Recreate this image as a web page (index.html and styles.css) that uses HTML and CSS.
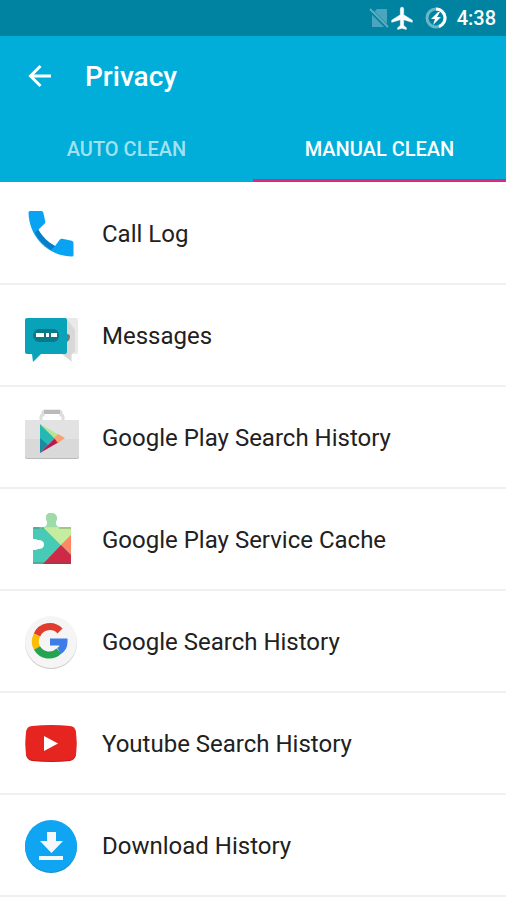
FILE: index.html
```html
<!DOCTYPE html>
<html lang="en">
<head>
    <meta charset="UTF-8">
    <meta name="viewport" content="width=device-width, initial-scale=1.0">
    <title>Privacy</title>
    <link rel="stylesheet" href="styles.css">
</head>
<body>
    <div class="status-bar">
        <svg class="status-icon" viewBox="0 0 20 22" width="20" height="22" aria-hidden="true">
            <path d="M8 2h10v18H3V7z" fill="#4aa5bd"/>
            <path d="M1 3l17 17" stroke="#0083a0" stroke-width="4"/>
            <path d="M1 2l18 18" stroke="#5caec3" stroke-width="2"/>
        </svg>
        <svg class="status-icon" viewBox="0 0 24 24" width="26" height="26" aria-hidden="true">
            <path d="M21.5 16v-2l-8-5V3.5a1.5 1.5 0 0 0-3 0V9l-8 5v2l8-2.5V19l-2.500 2v1.500l4-1 4 1V21l-2.500-2v-5.500z" fill="#fff" stroke="#fff" stroke-width=".5"/>
        </svg>
        <svg class="status-icon battery" viewBox="0 0 22 22" width="22" height="22" aria-hidden="true">
            <circle cx="11" cy="11" r="9" fill="none" stroke="#6ab5c8" stroke-width="3"/>
            <path d="M11 2a9 9 0 0 1 3 17.500" fill="none" stroke="#fff" stroke-width="3"/>
            <path d="M13 5l-7 7h4l-2 6 8-8h-4l3-5z" fill="#fff"/>
        </svg>
        <span class="clock">4:38</span>
    </div>

    <header class="header">
        <div class="toolbar">
            <button class="back" type="button" aria-label="Back">
                <svg viewBox="0 0 24 24" width="24" height="24">
                    <path d="M23 12H3M12.500 2L2.500 12l10 10" fill="none" stroke="#fff" stroke-width="3"/>
                </svg>
            </button>
            <h1>Privacy</h1>
        </div>
        <nav class="tabs">
            <a class="tab" href="#auto">AUTO CLEAN</a>
            <a class="tab active" href="#manual">MANUAL CLEAN</a>
        </nav>
    </header>

    <main>
        <ul class="list">
            <li>
                <a class="item" href="#calls">
                    <svg class="icon" viewBox="0 0 60 60" aria-hidden="true">
                        <path d="M9 7h11.500q1.500 0 1.800 1.500l2 9q.3 1.500-1 2.500L17 26q6 11 17 16l4.500-6q1-1.500 2.800-1.200l9.500 2q1.700.4 1.700 2V51q0 1.500-1.500 1.500C27 52 8 33 7.500 8.500Q7.500 7 9 7z" fill="#08a4f3"/>
                        <path d="M17 25q6 11 17 17l-4 4Q19 39 14 29z" fill="#087fc5"/>
                    </svg>
                    Call Log
                </a>
            </li>
            <li>
                <a class="item" href="#messages">
                    <svg class="icon" viewBox="0 0 60 60" aria-hidden="true">
                        <path d="M40 12h15q2 0 2 2v32q0 2-2 2h-4v8l-10-8z" fill="#e9e9e9"/>
                        <path d="M46 13l8 11v21l-4 4v6l-9-7h5z" fill="#d8d8d8"/>
                        <path d="M46 28q3 0 3 3t-3 5z" fill="#777"/>
                        <path d="M6 12h38q2 0 2 2v32q0 2-2 2H20l-8 8-1-8H6q-2 0-2-2V14q0-2 2-2z" fill="#08a3b8"/>
                        <rect x="12" y="23" width="26" height="13" rx="6" fill="#087989"/>
                        <path d="M15 27h8v4h-8zM25 27h3v4h-3zM30 27h6v4h-6z" fill="#fff"/>
                    </svg>
                    Messages
                </a>
            </li>
            <li>
                <a class="item" href="#play">
                    <svg class="icon" viewBox="0 0 60 60" aria-hidden="true">
                        <path d="M20 13V9q0-2 2-2V5q0-2 2-2h14q2 0 2 2v2q2 0 2 2v4" fill="none" stroke="#dcdcdc" stroke-width="3"/>
                        <path d="M23 4h16" stroke="#bababa" stroke-width="4"/>
                        <rect x="4" y="13" width="54" height="38" rx="2" fill="#b9b9b9"/>
                        <rect x="4" y="12" width="54" height="38" rx="2" fill="#d9d9d9"/>
                        <path d="M4 14q0-2 2-2h50q2 0 2 2v17H4z" fill="#e2e2e2"/>
                        <path d="M19 16v29l15-15z" fill="#25b8b4"/>
                        <path d="M19 30v15l8-8z" fill="#188da2"/>
                        <path d="M19 16l19 11-4 4z" fill="#b8e493"/>
                        <path d="M19 45l15-15 4 4z" fill="#bd1752"/>
                        <path d="M33 30l4-4 7 4-7 5z" fill="#f6a271"/>
                    </svg>
                    Google Play Search History
                </a>
            </li>
            <li>
                <a class="item" href="#service">
                    <svg class="icon" viewBox="0 0 60 60" aria-hidden="true">
                        <defs>
                            <clipPath id="puzzle">
                                <path d="M13 17h10q3 0 3-3V11q-1-1-1-3 0-5 5-5t6 5q0 2-1 3v3q0 3 3 3h12v37H12V40h2q1 0 3-1 6 0 6-4.500T17 30q-2-1-3-1h-2V18q0-1 1-1z"/>
                            </clipPath>
                        </defs>
                        <g clip-path="url(#puzzle)">
                            <path d="M10 0h42v56H10z" fill="#48cbb6"/>
                            <path d="M21 16l19 19 12-12V0H21z" fill="#bdeb9d"/>
                            <path d="M10 0h42v17H25l-6 2z" fill="#9edba8"/>
                            <path d="M25 18h25v7L40 35 23 18z" fill="#c5eda0"/>
                            <path d="M40 35l12-12v24z" fill="#ff8965"/>
                            <path d="M40 35L20 56h32V47z" fill="#cf2947"/>
                            <path d="M12 18h11M38 18h12M12 53h38" fill="none" stroke="#4d5a50" stroke-opacity=".5"/>
                        </g>
                    </svg>
                    Google Play Service Cache
                </a>
            </li>
            <li>
                <a class="item" href="#search">
                    <svg class="icon" viewBox="0 0 60 60" aria-hidden="true">
                        <circle cx="30" cy="31" r="26" fill="#c9c9c9"/>
                        <circle cx="30" cy="30" r="26" fill="#f5f5f5"/>
                        <g fill="none" stroke-width="7">
                            <path d="M16 23a14 14 0 0 1 23-4" stroke="#e13d2f"/>
                            <path d="M16 36a14 14 0 0 1 0-13" stroke="#fdbd07"/>
                            <path d="M38 39a14 14 0 0 1-22-3" stroke="#26a351"/>
                            <path d="M29 30h14q0 6-5 9" stroke="#3e7de8"/>
                        </g>
                    </svg>
                    Google Search History
                </a>
            </li>
            <li>
                <a class="item" href="#youtube">
                    <svg class="icon" viewBox="0 0 60 60" aria-hidden="true">
                        <path d="M11 13q20-2 38 0 5 0 6 6 1 11 0 22-1 5-6 6-18 2-38 0-5-1-6-6-1-11 0-22 1-6 6-6z" fill="#bd1c1c"/>
                        <path d="M11 12q20-2 38 0 5 0 6 6 1 11 0 22-1 5-6 6-18 2-38 0-5-1-6-6-1-11 0-22 1-6 6-6z" fill="#e62520"/>
                        <path d="M23 22v15l14-7.500z" fill="#fff"/>
                    </svg>
                    Youtube Search History
                </a>
            </li>
            <li>
                <a class="item" href="#downloads">
                    <svg class="icon" viewBox="0 0 60 60" aria-hidden="true">
                        <circle cx="30" cy="31" r="26" fill="#188cc7"/>
                        <circle cx="30" cy="30" r="26" fill="#10a5f3"/>
                        <path d="M26 16h9v9h7L30.500 37 19 25h7zM18 40h24v4H18z" fill="#f5f8fa"/>
                    </svg>
                    Download History
                </a>
            </li>
        </ul>
    </main>
</body>
</html>
```

FILE: styles.css
```css
* {
    box-sizing: border-box;
}
body {
    margin: 0;
    font-family: Roboto, "Liberation Sans", sans-serif;
    background-color: #fff;
    color: #212121;
}
a {
    color: inherit;
    text-decoration: none;
}
.status-bar {
    display: flex;
    align-items: center;
    justify-content: flex-end;
    height: 36px;
    padding-right: 10px;
    background-color: #0083a0;
    color: #fff;
}
.battery {
    margin: 0 10px;
}
.clock {
    font-size: 20px;
    font-weight: 500;
}
.header {
    background-color: #00aed9;
    color: #fff;
}
.toolbar {
    display: flex;
    align-items: center;
    gap: 33px;
    height: 80px;
    padding: 0 28px;
}
.back {
    display: flex;
    padding: 0;
    border: none;
    background: none;
    cursor: pointer;
}
h1 {
    margin: 0;
    font-size: 28px;
    font-weight: 500;
}
.tabs {
    display: flex;
}
.tab {
    flex: 1;
    height: 66px;
    padding-top: 3px;
    border-bottom: 3px solid transparent;
    color: #a3e1f1;
    font-size: 20px;
    font-weight: 500;
    line-height: 60px;
    text-align: center;
}
.active {
    border-bottom-color: #e0267f;
    color: #fff;
}
.list {
    margin: 0;
    padding: 1px 0 0;
    list-style: none;
}
.item {
    display: flex;
    align-items: center;
    gap: 21px;
    height: 102px;
    padding: 2px 21px 0;
    border-bottom: 2px solid #f0f0f0;
    font-size: 24px;
}
.icon {
    flex: none;
    width: 60px;
    height: 60px;
}
```
